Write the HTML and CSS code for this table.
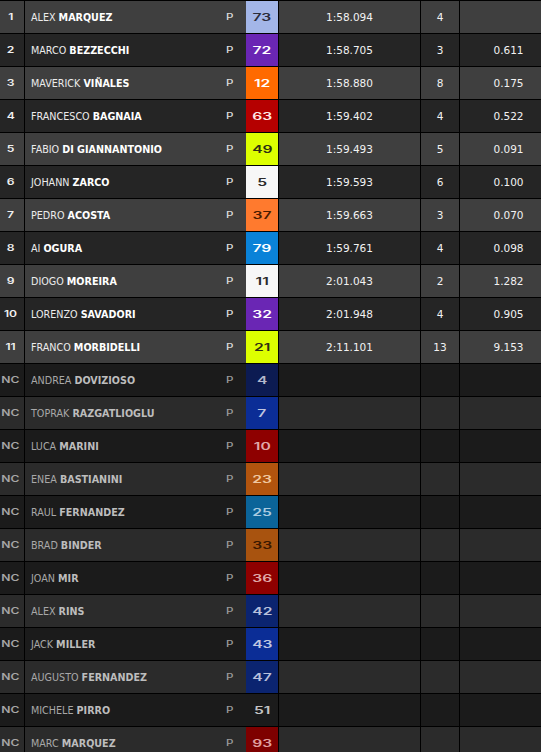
FILE: index.html
```html
<!DOCTYPE html>
<html>
<head>
<meta charset="utf-8">
<link rel="stylesheet" href="styles.css">
</head>
<body>
<div class="table">
  <div class="row light"><div class="pos"><span class="disp">1</span></div><div class="rider"><span class="name">ALEX <b>MARQUEZ</b></span><span class="p disp">P</span><span class="num c-lav"><span class="disp">73</span></span></div><div class="time">1:58.094</div><div class="laps">4</div><div class="gap"></div></div>
  <div class="row dark"><div class="pos"><span class="disp">2</span></div><div class="rider"><span class="name">MARCO <b>BEZZECCHI</b></span><span class="p disp">P</span><span class="num c-purple"><span class="disp">72</span></span></div><div class="time">1:58.705</div><div class="laps">3</div><div class="gap">0.611</div></div>
  <div class="row light"><div class="pos"><span class="disp">3</span></div><div class="rider"><span class="name">MAVERICK <b>VIÑALES</b></span><span class="p disp">P</span><span class="num c-orange"><span class="disp">12</span></span></div><div class="time">1:58.880</div><div class="laps">8</div><div class="gap">0.175</div></div>
  <div class="row dark"><div class="pos"><span class="disp">4</span></div><div class="rider"><span class="name">FRANCESCO <b>BAGNAIA</b></span><span class="p disp">P</span><span class="num c-red"><span class="disp">63</span></span></div><div class="time">1:59.402</div><div class="laps">4</div><div class="gap">0.522</div></div>
  <div class="row light"><div class="pos"><span class="disp">5</span></div><div class="rider"><span class="name">FABIO <b>DI GIANNANTONIO</b></span><span class="p disp">P</span><span class="num c-yellow"><span class="disp">49</span></span></div><div class="time">1:59.493</div><div class="laps">5</div><div class="gap">0.091</div></div>
  <div class="row dark"><div class="pos"><span class="disp">6</span></div><div class="rider"><span class="name">JOHANN <b>ZARCO</b></span><span class="p disp">P</span><span class="num c-white"><span class="disp">5</span></span></div><div class="time">1:59.593</div><div class="laps">6</div><div class="gap">0.100</div></div>
  <div class="row light"><div class="pos"><span class="disp">7</span></div><div class="rider"><span class="name">PEDRO <b>ACOSTA</b></span><span class="p disp">P</span><span class="num c-ktm"><span class="disp">37</span></span></div><div class="time">1:59.663</div><div class="laps">3</div><div class="gap">0.070</div></div>
  <div class="row dark"><div class="pos"><span class="disp">8</span></div><div class="rider"><span class="name">AI <b>OGURA</b></span><span class="p disp">P</span><span class="num c-sky"><span class="disp">79</span></span></div><div class="time">1:59.761</div><div class="laps">4</div><div class="gap">0.098</div></div>
  <div class="row light"><div class="pos"><span class="disp">9</span></div><div class="rider"><span class="name">DIOGO <b>MOREIRA</b></span><span class="p disp">P</span><span class="num c-white"><span class="disp">11</span></span></div><div class="time">2:01.043</div><div class="laps">2</div><div class="gap">1.282</div></div>
  <div class="row dark"><div class="pos"><span class="disp">10</span></div><div class="rider"><span class="name">LORENZO <b>SAVADORI</b></span><span class="p disp">P</span><span class="num c-purple"><span class="disp">32</span></span></div><div class="time">2:01.948</div><div class="laps">4</div><div class="gap">0.905</div></div>
  <div class="row light"><div class="pos"><span class="disp">11</span></div><div class="rider"><span class="name">FRANCO <b>MORBIDELLI</b></span><span class="p disp">P</span><span class="num c-yellow"><span class="disp">21</span></span></div><div class="time">2:11.101</div><div class="laps">13</div><div class="gap">9.153</div></div>

  <div class="row nc dark"><div class="pos"><span class="disp">NC</span></div><div class="rider"><span class="name">ANDREA <b>DOVIZIOSO</b></span><span class="p disp">P</span><span class="num n-navy"><span class="disp">4</span></span></div><div class="time"></div><div class="laps"></div><div class="gap"></div></div>
  <div class="row nc light"><div class="pos"><span class="disp">NC</span></div><div class="rider"><span class="name">TOPRAK <b>RAZGATLIOGLU</b></span><span class="p disp">P</span><span class="num n-blue"><span class="disp">7</span></span></div><div class="time"></div><div class="laps"></div><div class="gap"></div></div>
  <div class="row nc dark"><div class="pos"><span class="disp">NC</span></div><div class="rider"><span class="name">LUCA <b>MARINI</b></span><span class="p disp">P</span><span class="num n-red"><span class="disp">10</span></span></div><div class="time"></div><div class="laps"></div><div class="gap"></div></div>
  <div class="row nc light"><div class="pos"><span class="disp">NC</span></div><div class="rider"><span class="name">ENEA <b>BASTIANINI</b></span><span class="p disp">P</span><span class="num n-orange"><span class="disp">23</span></span></div><div class="time"></div><div class="laps"></div><div class="gap"></div></div>
  <div class="row nc dark"><div class="pos"><span class="disp">NC</span></div><div class="rider"><span class="name">RAUL <b>FERNANDEZ</b></span><span class="p disp">P</span><span class="num n-teal"><span class="disp">25</span></span></div><div class="time"></div><div class="laps"></div><div class="gap"></div></div>
  <div class="row nc light"><div class="pos"><span class="disp">NC</span></div><div class="rider"><span class="name">BRAD <b>BINDER</b></span><span class="p disp">P</span><span class="num n-ktm"><span class="disp">33</span></span></div><div class="time"></div><div class="laps"></div><div class="gap"></div></div>
  <div class="row nc dark"><div class="pos"><span class="disp">NC</span></div><div class="rider"><span class="name">JOAN <b>MIR</b></span><span class="p disp">P</span><span class="num n-red"><span class="disp">36</span></span></div><div class="time"></div><div class="laps"></div><div class="gap"></div></div>
  <div class="row nc light"><div class="pos"><span class="disp">NC</span></div><div class="rider"><span class="name">ALEX <b>RINS</b></span><span class="p disp">P</span><span class="num n-navy2"><span class="disp">42</span></span></div><div class="time"></div><div class="laps"></div><div class="gap"></div></div>
  <div class="row nc dark"><div class="pos"><span class="disp">NC</span></div><div class="rider"><span class="name">JACK <b>MILLER</b></span><span class="p disp">P</span><span class="num n-blue"><span class="disp">43</span></span></div><div class="time"></div><div class="laps"></div><div class="gap"></div></div>
  <div class="row nc light"><div class="pos"><span class="disp">NC</span></div><div class="rider"><span class="name">AUGUSTO <b>FERNANDEZ</b></span><span class="p disp">P</span><span class="num n-navy2"><span class="disp">47</span></span></div><div class="time"></div><div class="laps"></div><div class="gap"></div></div>
  <div class="row nc dark"><div class="pos"><span class="disp">NC</span></div><div class="rider"><span class="name">MICHELE <b>PIRRO</b></span><span class="p disp">P</span><span class="num n-none"><span class="disp">51</span></span></div><div class="time"></div><div class="laps"></div><div class="gap"></div></div>
  <div class="row nc light"><div class="pos"><span class="disp">NC</span></div><div class="rider"><span class="name">MARC <b>MARQUEZ</b></span><span class="p disp">P</span><span class="num n-red2"><span class="disp">93</span></span></div><div class="time"></div><div class="laps"></div><div class="gap"></div></div>
</div>
</body>
</html>
```

FILE: styles.css
```css
html, body {
  margin: 0;
  padding: 0;
  background: #ffffff;
}

.table {
  width: 541px;
  background: #000000;
  padding-top: 1px;
  display: flex;
  flex-direction: column;
  gap: 1px;
  font-family: "DejaVu Sans", sans-serif;
}

.row {
  display: grid;
  grid-template-columns: 24px 253px 141px 38px 81px;
  column-gap: 1px;
  height: 32px;
}

.row > div {
  display: flex;
  align-items: center;
}

.row.light > div { background: #3f3f3f; }
.row.dark > div { background: #252525; }
.row.nc.light > div { background: #2b2b2b; }
.row.nc.dark > div { background: #1b1b1b; }

.disp {
  display: inline-block;
  font-family: Inter, "DejaVu Sans", sans-serif;
  font-weight: 600;
}

.pos {
  justify-content: center;
  padding-right: 3px;
  color: #f0f0f0;
  font-size: 8.4px;
}
.pos .disp { transform: scaleX(1.45); }

.rider {
  padding-left: 6px;
}

.name {
  flex: 1;
  font-size: 9.6px;
  color: #ececec;
  white-space: nowrap;
}
.name b {
  font-weight: bold;
  color: #ffffff;
}

.p {
  font-size: 8.6px;
  font-weight: 500;
  color: #dcdcdc;
  margin-right: 13px;
  transform: scaleX(1.35);
}

.num {
  width: 32px;
  height: 32px;
  display: flex;
  align-items: center;
  justify-content: center;
  font-size: 9.8px;
  padding-top: 1px;
  box-sizing: border-box;
}
.num .disp { transform: scaleX(1.6); }

.time, .laps, .gap {
  justify-content: center;
  font-size: 10.5px;
  color: #f2f2f2;
}
.gap { padding-left: 16px; }

.c-lav { background: #a3b6e8; color: #2a2c3a; }
.c-purple { background: #6a26b4; color: #ffffff; }
.c-orange { background: #ff6a00; color: #ffffff; }
.c-red { background: #b50000; color: #ffe6e6; }
.c-yellow { background: #ddff00; color: #2e2e14; }
.c-white { background: #f7f7f7; color: #2a2a2a; }
.c-ktm { background: #ff7a2e; color: #4a1c00; }
.c-sky { background: #0a82d8; color: #ffffff; }

.row.nc .pos { color: #a6a6a6; }
.row.nc .name { color: #a8a8a8; }
.row.nc .name b { color: #bdbdbd; }
.row.nc .p { color: #9c9c9c; }

.n-navy { background: #0c1b52; color: #b4b8cc; }
.n-blue { background: #0b2d96; color: #c0c6e0; }
.n-red { background: #8e0000; color: #e0a8a8; }
.n-orange { background: #b2540e; color: #f0c8a0; }
.n-teal { background: #0b6499; color: #aacbe0; }
.n-ktm { background: #a8530f; color: #3a1800; }
.n-navy2 { background: #0b2470; color: #b8c0dc; }
.n-none { background: transparent; color: #c4c4c4; }
.n-red2 { background: #7e0000; color: #e0a0a0; }
```
